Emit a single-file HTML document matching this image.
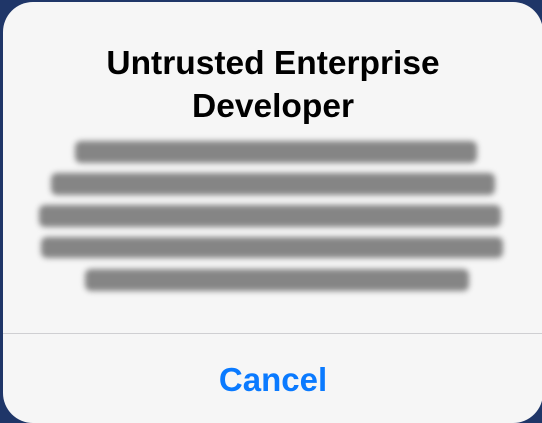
<!DOCTYPE html>
<html><head><style>
html,body{margin:0;padding:0;width:542px;height:422px;overflow:hidden;background:#1f3668;}
.card{position:absolute;left:3px;top:2px;width:540px;height:421px;background:#f6f6f6;border-radius:30px;overflow:hidden;font-family:"Liberation Sans",sans-serif;}
.t{position:absolute;left:0;width:540px;text-align:center;font-size:33.5px;font-weight:bold;color:#000;line-height:40px;}
.s{position:absolute;background:#858585;filter:blur(3px);border-radius:6px;}
.sep{position:absolute;left:0;width:540px;top:331px;height:1px;background:#cfcfd2;}
.c{position:absolute;left:0;width:540px;top:358px;text-align:center;font-size:33px;font-weight:bold;color:#0a7aff;line-height:40px;}
</style></head><body>
<div class="card">
<div class="t" style="top:42px">Untrusted Enterprise</div>
<div class="t" style="top:85px">Developer</div>
<div class="s" style="left:72px;top:139px;width:402px;height:22px"></div>
<div class="s" style="left:48px;top:171px;width:444px;height:22px"></div>
<div class="s" style="left:36px;top:203px;width:462px;height:22px"></div>
<div class="s" style="left:38px;top:235px;width:462px;height:21px"></div>
<div class="s" style="left:82px;top:267px;width:384px;height:22px"></div>
<div class="sep"></div>
<div class="c">Cancel</div>
</div>
</body></html>
